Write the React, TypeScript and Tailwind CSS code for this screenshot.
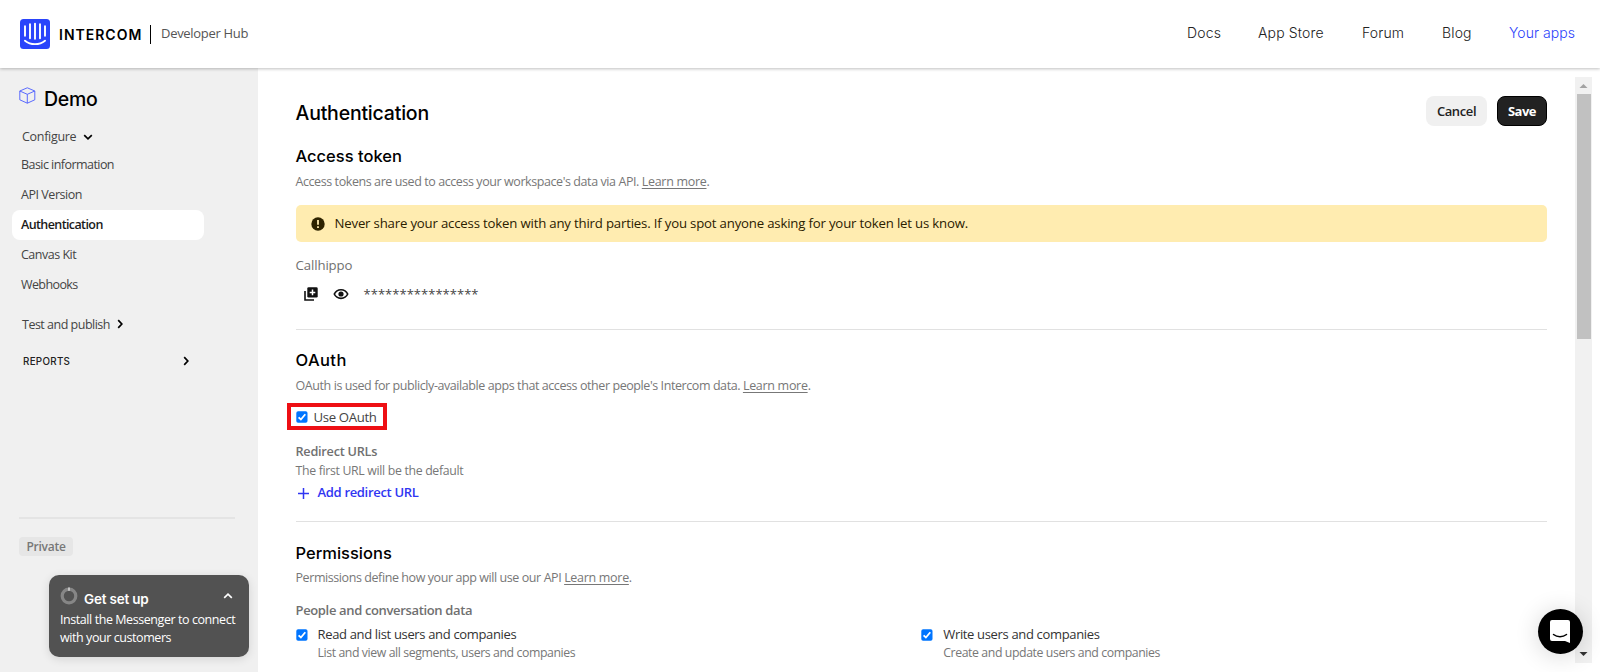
import type { ReactNode } from 'react'

const navLinks = [
  { label: 'Docs', width: 'w-[34px]' },
  { label: 'App Store', width: 'w-[67px]' },
  { label: 'Forum', width: 'w-[43px]' },
  { label: 'Blog', width: 'w-[30px]' },
]

const configureItems = [
  { label: 'Basic information', tracking: 'tracking-[-0.55px]' },
  { label: 'API Version', tracking: 'tracking-[-0.45px]' },
  { label: 'Authentication', tracking: 'tracking-[-0.6px]', active: true },
  { label: 'Canvas Kit', tracking: 'tracking-[-0.5px]' },
  { label: 'Webhooks', tracking: 'tracking-[-0.6px]' },
]

function Chevron({ className }: { className: string }) {
  return (
    <svg
      className={`h-[10px] w-[10px] ${className}`}
      viewBox="0 0 10 10"
      fill="none"
      stroke="currentColor"
      strokeWidth="1.7"
    >
      <path d="M1.2 3.2 5 6.8 8.8 3.2" />
    </svg>
  )
}

function Checkbox() {
  return (
    <svg className="h-[12px] w-[12px] shrink-0" viewBox="0 0 12 12" fill="none">
      <rect x="0.3" y="0.3" width="11.2" height="11.4" rx="1.8" fill="#0075ff" />
      <path d="M2.6 6.3 4.9 8.5 9.3 3.2" stroke="#fff" strokeWidth="1.8" />
    </svg>
  )
}

function Logo() {
  return (
    <svg className="h-[30px] w-[30px]" viewBox="0 0 30 30" fill="none">
      <rect width="30" height="30" rx="3.5" fill="#2a44fb" />
      <g stroke="#fff" strokeWidth="1.9" strokeLinecap="round">
        <path d="M5 7.2v9.6M10 5.2v14M15 4.6v15.2M20 5.2v14M25 7.2v9.6" />
        <path d="M5 21.7c5.6 4.6 14.4 4.6 20 0" />
      </g>
    </svg>
  )
}

function Header() {
  return (
    <header className="relative z-10 flex h-[68px] shrink-0 items-center bg-white pl-5 shadow-[0_1px_3px_rgba(0,0,0,0.25)]">
      <Logo />
      <span className="ml-[9px] w-[83px] whitespace-nowrap font-[Inter] text-[14px] font-semibold tracking-[1px] text-black">
        INTERCOM
      </span>
      <div className="ml-2 h-[19px] w-px bg-black" />
      <span className="ml-[10px] whitespace-nowrap text-[13px] tracking-[-0.3px] text-[#555]">
        Developer Hub
      </span>
      <nav className="ml-auto flex gap-[37px] whitespace-nowrap pr-[26px] pb-[4px] font-[Inter] text-[14px] font-light tracking-[0.15px] text-[#222]">
        {navLinks.map((link) => (
          <a key={link.label} className={link.width}>
            {link.label}
          </a>
        ))}
        <a className="w-[65px] tracking-[0.05px] text-[#2b3ffb]">Your apps</a>
      </nav>
    </header>
  )
}

function SetupWidget() {
  return (
    <div className="ml-[49px] mt-[19px] h-[82px] w-[200px] rounded-[10px] bg-[#525252] px-[11px] pt-[11px] text-white shadow-[0_2px_10px_rgba(0,0,0,0.12)]">
      <div className="flex h-[22px] items-center">
        <svg className="mb-[3px] h-[18px] w-[18px]" viewBox="0 0 18 18" fill="none">
          <circle cx="9" cy="9" r="6.8" stroke="#868686" strokeWidth="3.2" />
          <path d="M8 2.2h2" stroke="#c4c4c4" strokeWidth="3.2" />
        </svg>
        <span className="ml-[6px] pt-[4px] font-[Inter] text-[13.5px] font-semibold leading-[22px] tracking-[-0.2px]">
          Get set up
        </span>
        <Chevron className="mr-[5px] mb-[2px] ml-auto rotate-180" />
      </div>
      <p className="whitespace-nowrap pt-[3px] text-[12.5px] leading-[18px] tracking-[-0.43px]">
        Install the Messenger to connect
        <br />
        with your customers
      </p>
    </div>
  )
}

function Sidebar() {
  return (
    <aside className="flex w-[258px] shrink-0 flex-col bg-[#f0f0f0] text-[12.5px] text-[#444]">
      <div className="flex h-[53px] items-center pl-[19px] pt-[10px]">
        <svg
          className="mb-[8px] h-[17px] w-[17px]"
          viewBox="0 0 17 17"
          fill="none"
          stroke="#4a5bff"
          strokeWidth="0.9"
          strokeLinejoin="round"
        >
          <path d="M8.3.8 15.8 4v8.8l-7.5 3.4L.8 12.8V4zM.8 4l7.5 3.3L15.8 4M8.3 7.3v8.9" />
        </svg>
        <h1 className="ml-2 pt-px font-[Inter] text-[19.5px] font-medium tracking-[-0.3px] text-black">Demo</h1>
      </div>

      <div className="flex h-[32px] items-center pl-[22px] tracking-[-0.3px]">
        Configure
        <Chevron className="ml-[7px] text-black" />
      </div>
      <ul className="mt-[-3px] pl-3">
        {configureItems.map((item) => (
          <li
            key={item.label}
            className={`flex h-[30px] w-[192px] items-center rounded-[8px] pl-[9px] pt-px ${item.tracking} ${
              item.active ? 'bg-white font-semibold text-[#1a1a1a]' : ''
            }`}
          >
            {item.label}
          </li>
        ))}
      </ul>
      <div className="mt-[9px] flex h-[32px] items-center pl-[22px] tracking-[-0.5px]">
        Test and publish
        <Chevron className="ml-[5px] mb-[2px] -rotate-90 text-black" />
      </div>
      <div className="mt-[5px] flex h-[32px] items-center pl-[23px] font-[Inter] text-[9.8px] font-medium tracking-[0.3px] text-[#222]">
        REPORTS
        <Chevron className="mr-[67px] mb-[2px] ml-auto -rotate-90 text-black" />
      </div>

      <div className="mt-[139px] ml-[19px] h-[2px] w-[216px] bg-[#e4e4e4]" />
      <span className="mt-[18px] ml-[19px] flex h-[19px] w-[54px] items-center justify-center rounded-[4px] bg-[#e6e6e6] text-[12px] font-semibold tracking-[-0.25px] text-[#777]">
        Private
      </span>
      <SetupWidget />
    </aside>
  )
}

function SectionHeading({ children, className = '' }: { children: ReactNode; className?: string }) {
  return (
    <h3
      className={`h-[24px] whitespace-nowrap font-[Inter] text-[16.5px] font-medium leading-[23px] text-black ${className}`}
    >
      {children}
    </h3>
  )
}

function Description({ children, className }: { children: ReactNode; className: string }) {
  return (
    <p
      className={`h-[20px] whitespace-nowrap text-[12.5px] leading-[22px] tracking-[-0.42px] text-[#777] ${className}`}
    >
      {children}
      <a className="tracking-[-0.3px] underline underline-offset-2">Learn more</a>.
    </p>
  )
}

function Permission({ title, text }: { title: string; text: string }) {
  return (
    <div className="flex whitespace-nowrap">
      <div className="pt-[5px]">
        <Checkbox />
      </div>
      <div className="ml-[10px]">
        <div className="h-[19px] text-[13px] leading-[20px] tracking-[-0.34px] text-[#333]">{title}</div>
        <div className="h-[19px] text-[12.3px] leading-[20px] tracking-[-0.41px] text-[#777]">{text}</div>
      </div>
    </div>
  )
}

function AccessToken() {
  return (
    <section className="h-[185px] border-b border-[#e1e1e1]">
      <SectionHeading>Access token</SectionHeading>
      <Description className="mt-[2px]">
        Access tokens are used to access your workspace's data via API.{' '}
      </Description>
      <div className="mt-[14px] flex h-[37px] items-center rounded-[5px] bg-[#ffecb0] pl-[15px] text-[13.2px] tracking-[-0.18px] text-[#2b2000]">
        <svg className="h-[14px] w-[14px]" viewBox="0 0 14 14" fill="none">
          <circle cx="7" cy="7" r="6.7" fill="#2e2300" />
          <path d="M7 3v4.8M7 9.2v1.8" stroke="#ffecb0" strokeWidth="1.8" />
        </svg>
        <span className="ml-[10px] whitespace-nowrap font-medium">
          Never share your access token with any third parties. If you spot anyone asking for your token let us know.
        </span>
      </div>
      <div className="mt-[13px] h-[20px] text-[13.2px] leading-[21px] tracking-[-0.1px] text-[#707070]">Callhippo</div>
      <div className="mt-[8px] flex h-[22px] items-center pl-[8px] text-[#111]">
        <svg className="h-[14px] w-[14px]" viewBox="0 0 14 14" fill="none">
          <path d="M1 4v9h9" stroke="currentColor" strokeWidth="1.6" />
          <rect x="3.3" y="0.3" width="10.4" height="10.2" rx="1.3" fill="currentColor" />
          <path d="M8.5 2.6v5.6M5.7 5.4h5.6" stroke="#fff" strokeWidth="1.5" />
        </svg>
        <svg className="ml-[15px] h-[12px] w-[16px]" viewBox="0 0 16 12" fill="none">
          <path d="M1.3 6C4 .3 12 .3 14.7 6 12 11.7 4 11.7 1.3 6z" stroke="currentColor" strokeWidth="1.7" />
          <circle cx="8" cy="6" r="2.6" fill="currentColor" />
        </svg>
        <span className="ml-[15px] pt-[2px] text-[13px] tracking-[0.03px] text-[#444]">****************</span>
      </div>
    </section>
  )
}

function OAuth() {
  return (
    <section className="h-[192px] border-b border-[#e1e1e1] pt-[19px]">
      <SectionHeading className="tracking-[0.4px]">OAuth</SectionHeading>
      <Description className="mt-[2px]">
        OAuth is used for publicly-available apps that access other people's Intercom data.{' '}
      </Description>
      <div className="mt-[8px] ml-[-9px] flex h-[27px] w-[100px] items-center whitespace-nowrap border-4 border-[#ee0f14] pl-[5px] text-[13.2px] tracking-[-0.35px] text-[#444]">
        <Checkbox />
        <span className="ml-[6px] pt-[2px]">Use OAuth</span>
      </div>
      <div className="mt-[12px] h-[19px] text-[12.7px] font-semibold leading-[19px] tracking-[-0.25px] text-[#707070]">
        Redirect URLs
      </div>
      <div className="h-[19px] text-[12.3px] leading-[19px] tracking-[-0.32px] text-[#777]">
        The first URL will be the default
      </div>
      <div className="mt-[3px] flex h-[20px] items-center text-[13px] font-semibold tracking-[-0.32px] text-[#3036f2]">
        <svg className="ml-[2px] h-[11px] w-[11px]" viewBox="0 0 11 11" stroke="currentColor" strokeWidth="1.5">
          <path d="M5.5 0v11M0 5.5h11" />
        </svg>
        <span className="ml-[9px]">Add redirect URL</span>
      </div>
    </section>
  )
}

function Permissions() {
  return (
    <section className="pt-[20px]">
      <SectionHeading>Permissions</SectionHeading>
      <Description className="mt-[1px]">Permissions define how your app will use our API </Description>
      <div className="mt-[13px] h-[20px] text-[13px] font-semibold leading-[20px] tracking-[-0.35px] text-[#707070]">
        People and conversation data
      </div>
      <div className="mt-[4px] grid grid-cols-2">
        <Permission title="Read and list users and companies" text="List and view all segments, users and companies" />
        <Permission title="Write users and companies" text="Create and update users and companies" />
      </div>
    </section>
  )
}

function Scrollbar() {
  return (
    <div className="mt-[9px] ml-[28px] flex h-[586px] w-[17px] shrink-0 flex-col items-center bg-[#f1f1f1]">
      <svg className="h-[17px] w-[17px] shrink-0" viewBox="0 0 17 17">
        <path d="M4.5 11h8L8.5 7z" fill="#a3a3a3" />
      </svg>
      <div className="h-[245px] w-[14px] bg-[#c1c1c1]" />
      <svg className="mt-auto h-[17px] w-[17px] shrink-0" viewBox="0 0 17 17">
        <path d="M4.5 6h8L8.5 10z" fill="#333" />
      </svg>
    </div>
  )
}

export default function App() {
  return (
    <div className="relative flex h-[672px] w-[1600px] flex-col overflow-hidden bg-white font-['Open_Sans','Noto_Sans',sans-serif]">
      <Header />
      <div className="flex h-[604px]">
        <Sidebar />
        <main className="ml-[37.5px] w-[1251.5px] shrink-0 pt-[28px]">
          <div className="flex h-[49px] items-start">
            <h2 className="font-[Inter] text-[19.5px] font-medium leading-[34px] tracking-[-0.2px] text-black">
              Authentication
            </h2>
            <button className="ml-auto h-[30px] w-[61px] rounded-[8px] bg-[#f0f0f0] pt-px text-[13px] font-semibold tracking-[-0.4px] text-[#222]">
              Cancel
            </button>
            <button className="ml-[10px] h-[30px] w-[50px] rounded-[8px] border border-black bg-[#222] pt-px text-[13px] font-bold tracking-[-0.5px] text-white">
              Save
            </button>
          </div>
          <AccessToken />
          <OAuth />
          <Permissions />
        </main>
        <Scrollbar />
      </div>

      {/* Messenger launcher */}
      <button className="absolute top-[609px] left-[1538px] flex h-[45px] w-[45px] items-center justify-center rounded-full bg-black pr-px shadow-[0_2px_24px_rgba(0,0,0,0.16)]">
        <svg className="h-[23px] w-[20px]" viewBox="0 0 20 23" fill="none">
          <path d="M2 0h16a2 2 0 0 1 2 2v21l-5-2H2a2 2 0 0 1-2-2V2a2 2 0 0 1 2-2z" fill="#fff" />
          <path d="M3.5 14.5c3.8 3.1 9.2 3.1 13 0" stroke="#000" strokeWidth="1.5" strokeLinecap="round" />
        </svg>
      </button>
    </div>
  )
}
